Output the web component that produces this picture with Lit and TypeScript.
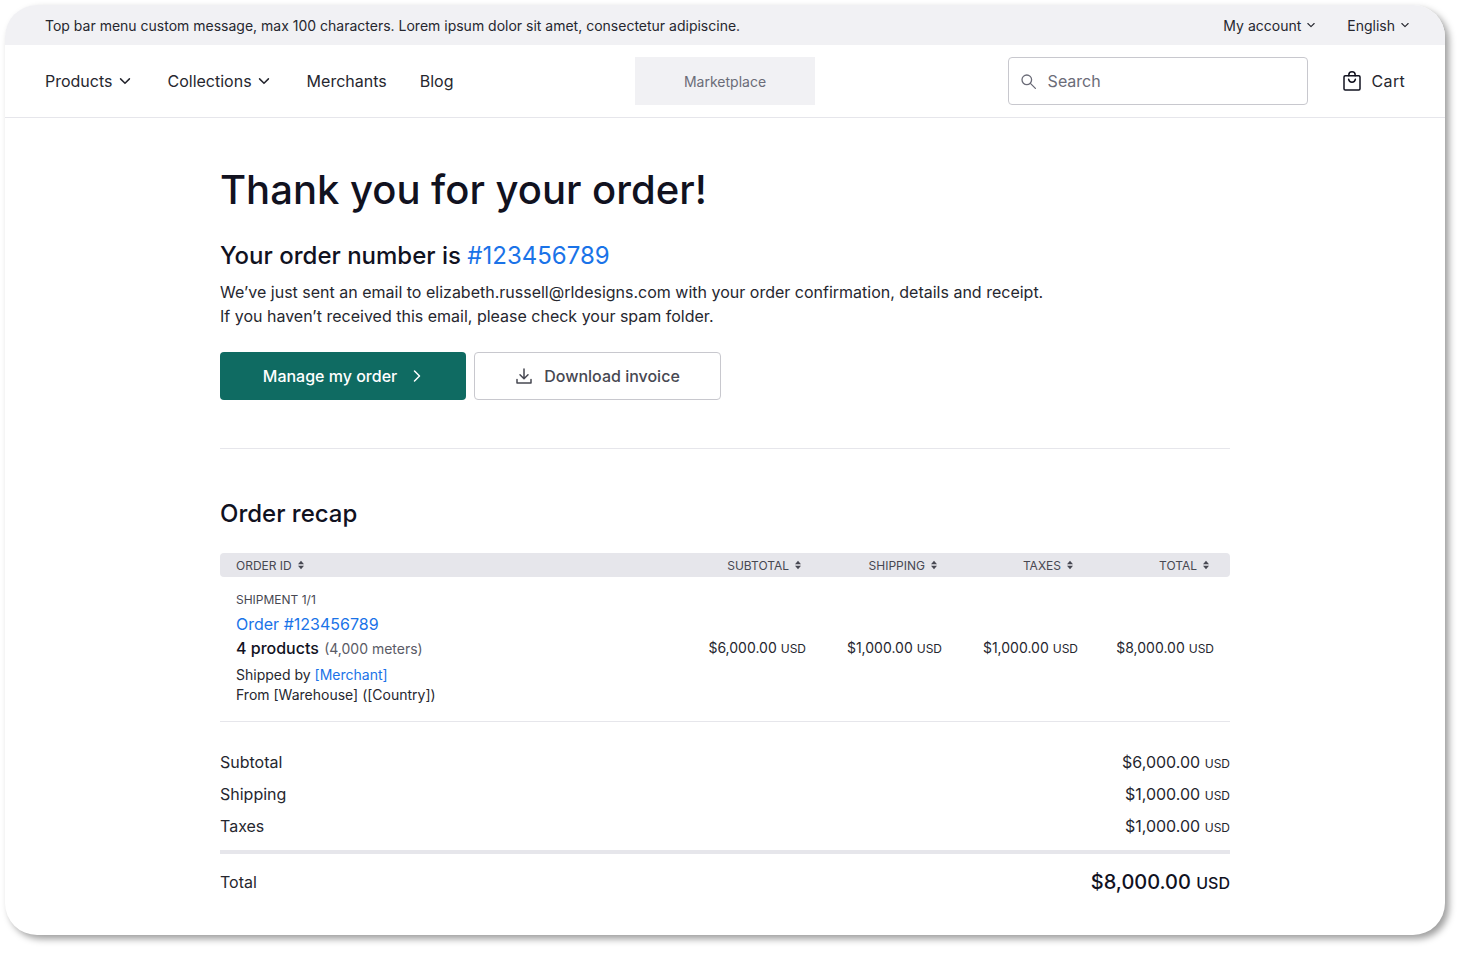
import { LitElement, html, css, svg } from 'lit';
import { customElement } from 'lit/decorators.js';

const chevron = (size: number) => html`<svg class="chev" width=${size} height=${size} viewBox="0 0 12 12" fill="none" stroke="currentColor" stroke-width="1.3" stroke-linecap="round" stroke-linejoin="round"><path d="M2.2 4.2 6 8l3.8-3.8" /></svg>`;

const sort = html`<svg class="sort" width="8" height="10" viewBox="0 0 8 10" fill="currentColor">${svg`<path d="M4 .8 7 4.2H1zM4 9.2 1 5.8h6z" />`}</svg>`;

const columns = ['SUBTOTAL', 'SHIPPING', 'TAXES', 'TOTAL'];
const rowValues = ['$6,000.00', '$1,000.00', '$1,000.00', '$8,000.00'];
const summary = [
  ['Subtotal', '$6,000.00'],
  ['Shipping', '$1,000.00'],
  ['Taxes', '$1,000.00'],
];

@customElement('app-root')
export class AppRoot extends LitElement {
  static styles = css`
    :host {
      display: block;
      height: 954px;
      box-sizing: border-box;
      padding: 5px 0 0 5px;
      background: #fff;
      font-family: Inter, 'Liberation Sans', sans-serif;
      color: #11121f;
    }
    .window {
      width: 1440px;
      height: 930px;
      background: #fff;
      border-radius: 32px;
      overflow: hidden;
      box-shadow: 4px 4px 7px rgba(0, 0, 0, 0.38);
    }
    .topbar {
      height: 40px;
      background: #f1f1f4;
      display: flex;
      align-items: center;
      justify-content: space-between;
      padding: 0 35px 0 40px;
      font-size: 14px;
      color: #26272f;
    }
    .top-links {
      display: flex;
      gap: 31px;
    }
    .top-links span {
      display: flex;
      align-items: center;
      gap: 5px;
    }
    .nav {
      height: 72px;
      border-bottom: 1px solid #e6e6eb;
      display: grid;
      grid-template-columns: 1fr 180px 1fr;
      align-items: center;
      padding: 0 40px;
      box-sizing: border-box;
      height: 73px;
      font-size: 16px;
      color: #26272f;
    }
    .menu {
      display: flex;
      gap: 33px;
    }
    .menu .drop {
      display: flex;
      align-items: center;
      gap: 5px;
      margin-right: 3px;
    }
    .logo {
      height: 48px;
      background: #f1f1f4;
      display: flex;
      align-items: center;
      justify-content: center;
      font-size: 14px;
      color: #6b6c78;
    }
    .nav-right {
      display: flex;
      justify-content: flex-end;
      align-items: center;
      gap: 35px;
    }
    .search {
      width: 300px;
      height: 48px;
      box-sizing: border-box;
      border: 1px solid #c8c8ce;
      border-radius: 4px;
      display: flex;
      align-items: center;
      gap: 11px;
      padding-left: 11px;
      color: #6b6c78;
    }
    .cart {
      display: flex;
      align-items: center;
      gap: 11px;
      letter-spacing: 0.3px;
    }
    main {
      width: 1010px;
      margin-left: 215px;
    }
    h1 {
      margin: 42px 0 0;
      font-size: 40px;
      line-height: 60px;
      font-weight: 500;
      color: #11121f;
    }
    h2 {
      margin: 18px 0 0;
      font-size: 24px;
      line-height: 36px;
      font-weight: 500;
    }
    .accent {
      color: #1a73e8;
    }
    .order-no {
      font-weight: 400;
    }
    p {
      margin: 6px 0 0;
      font-size: 16px;
      line-height: 24px;
      color: #26272f;
    }
    .actions {
      display: flex;
      gap: 8px;
      margin-top: 24px;
    }
    .btn {
      width: 246px;
      height: 48px;
      box-sizing: border-box;
      border-radius: 4px;
      display: flex;
      align-items: center;
      justify-content: center;
      font-size: 16px;
      font-weight: 500;
    }
    .primary {
      background: #0f6b62;
      color: #fff;
      gap: 14px;
    }
    .secondary {
      width: 247px;
      border: 1px solid #c8c8ce;
      color: #474852;
      gap: 11px;
    }
    .rule {
      height: 1px;
      background: #e6e6eb;
      margin-top: 48px;
    }
    .recap {
      margin: 47px 0 0;
      line-height: 36px;
    }
    .thead,
    .trow {
      display: grid;
      grid-template-columns: 1fr repeat(4, 136px);
      padding: 0 16px;
    }
    .thead {
      margin-top: 21px;
      height: 24px;
      align-items: center;
      background: #e6e6eb;
      border-radius: 4px;
      font-size: 12px;
      color: #474852;
    }
    .th {
      display: flex;
      align-items: center;
      gap: 5px;
    }
    .th.num {
      justify-content: flex-end;
      padding-right: 4px;
    }
    .sort {
      color: #474852;
    }
    .trow {
      align-items: center;
      border-bottom: 1px solid #e6e6eb;
      padding-top: 13px;
      padding-bottom: 16px;
    }
    .shipment {
      font-size: 12px;
      line-height: 20px;
      color: #474852;
    }
    .order-link {
      font-size: 16px;
      line-height: 28px;
      color: #1a73e8;
    }
    .products {
      font-size: 16px;
      line-height: 20px;
      font-weight: 500;
      color: #11121f;
    }
    .products small {
      font-size: 14px;
      font-weight: 400;
      color: #5a5b66;
      margin-left: 1px;
    }
    .ship {
      margin-top: 6px;
      font-size: 14px;
      line-height: 20px;
      color: #26272f;
    }
    .ship a {
      color: #1a73e8;
    }
    .val {
      text-align: right;
      font-size: 14px;
      color: #26272f;
    }
    .cur {
      font-size: 12px;
    }
    .summary {
      margin-top: 24px;
    }
    .line {
      display: flex;
      justify-content: space-between;
      align-items: center;
      height: 32px;
      font-size: 16px;
      color: #26272f;
    }
    .line .cur {
      font-size: 12px;
    }
    .thick {
      height: 4px;
      background: #e6e6eb;
      margin-top: 8px;
    }
    .total {
      display: flex;
      justify-content: space-between;
      align-items: center;
      height: 56px;
      font-size: 16px;
      color: #26272f;
    }
    .total b {
      font-size: 20px;
      font-weight: 500;
      color: #11121f;
    }
    .total b .cur {
      font-size: 16px;
    }
  `;

  render() {
    return html`
      <div class="window">
        <div class="topbar">
          <span>Top bar menu custom message, max 100 characters. Lorem ipsum dolor sit amet, consectetur adipiscine.</span>
          <div class="top-links">
            <span>My account ${chevron(10)}</span>
            <span>English ${chevron(10)}</span>
          </div>
        </div>
        <header class="nav">
          <div class="menu">
            <span class="drop">Products ${chevron(14)}</span>
            <span class="drop">Collections ${chevron(14)}</span>
            <span>Merchants</span>
            <span>Blog</span>
          </div>
          <div class="logo">Marketplace</div>
          <div class="nav-right">
            <div class="search">
              <svg width="17" height="17" viewBox="0 0 17 17" fill="none" stroke="currentColor" stroke-width="1.3" stroke-linecap="round"><circle cx="6.8" cy="6.8" r="4.8" /><path d="m10.4 10.4 5 5" /></svg>
              <span>Search</span>
            </div>
            <div class="cart">
              <svg width="18" height="20" viewBox="0 0 18 20" fill="none" stroke="#11121f" stroke-width="1.5" stroke-linejoin="round" stroke-linecap="round"><rect x="1" y="4.8" width="16" height="14.2" rx="1.2" /><path d="M5.8 4.8V4a3.2 3.2 0 0 1 6.4 0v.8M5.6 8.2c.3 2 1.7 3 3.4 3s3.100-1 3.400-3" /></svg>
              <span>Cart</span>
            </div>
          </div>
        </header>
        <main>
          <h1>Thank you for your order!</h1>
          <h2>Your order number is <span class="accent order-no">#123456789</span></h2>
          <p>We’ve just sent an email to elizabeth.russell@rldesigns.com with your order confirmation, details and receipt.<br />If you haven’t received this email, please check your spam folder.</p>
          <div class="actions">
            <div class="btn primary">
              <span>Manage my order</span>
              <svg width="12" height="14" viewBox="0 0 12 14" fill="none" stroke="currentColor" stroke-width="1.5" stroke-linecap="round" stroke-linejoin="round"><path d="m3.500 2 5 5-5 5" /></svg>
            </div>
            <div class="btn secondary">
              <svg width="18" height="18" viewBox="0 0 18 18" fill="none" stroke="currentColor" stroke-width="1.5" stroke-linecap="round" stroke-linejoin="round"><path d="M9 2v9.500M5 7.800l4 4 4-4M2 12.500V16h14v-3.500" /></svg>
              <span>Download invoice</span>
            </div>
          </div>
          <div class="rule"></div>
          <h2 class="recap">Order recap</h2>
          <div class="thead">
            <div class="th">ORDER ID ${sort}</div>
            ${columns.map((c) => html`<div class="th num">${c} ${sort}</div>`)}
          </div>
          <div class="trow">
            <div>
              <div class="shipment">SHIPMENT 1/1</div>
              <div class="order-link">Order #123456789</div>
              <div class="products">4 products <small>(4,000 meters)</small></div>
              <div class="ship">Shipped by <a>[Merchant]</a><br />From [Warehouse] ([Country])</div>
            </div>
            ${rowValues.map((v) => html`<div class="val">${v} <span class="cur">USD</span></div>`)}
          </div>
          <div class="summary">
            ${summary.map(([label, value]) => html`<div class="line"><span>${label}</span><span>${value} <span class="cur">USD</span></span></div>`)}
          </div>
          <div class="thick"></div>
          <div class="total">
            <span>Total</span>
            <b>$8,000.00 <span class="cur">USD</span></b>
          </div>
        </main>
      </div>
    `;
  }
}
